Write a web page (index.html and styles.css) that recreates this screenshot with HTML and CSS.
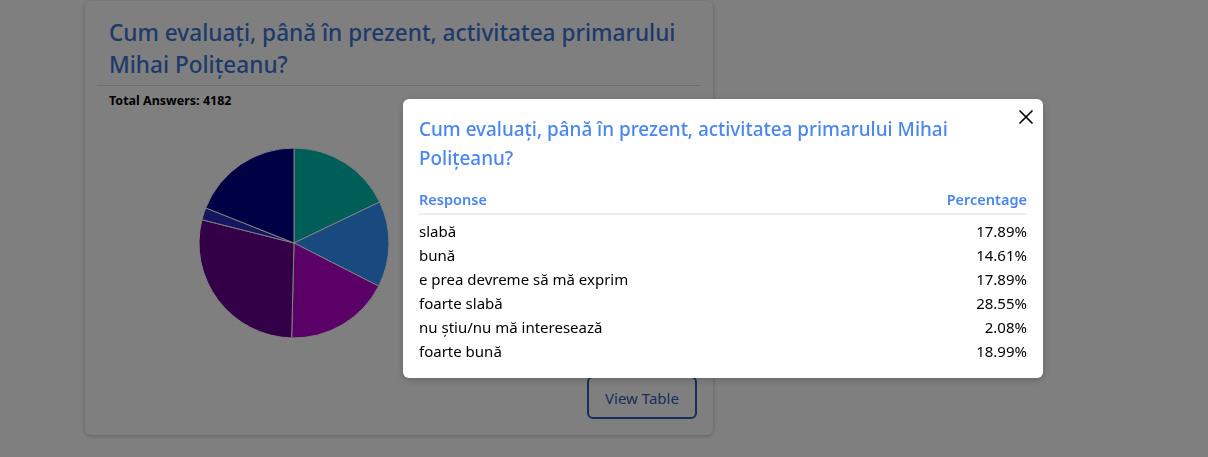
FILE: index.html
```html
<!DOCTYPE html>
<html lang="ro">
<head>
<meta charset="utf-8">
<title>Rezultate</title>
<link rel="stylesheet" href="styles.css">
</head>
<body>
<div class="page">
  <div class="card">
    <div class="card-head">
      <h2 class="card-title">Cum evaluați, până în prezent, activitatea primarului Mihai Polițeanu?</h2>
    </div>
    <div class="total">Total Answers: 4182</div>
    <div class="chart">
      <svg class="pie" width="200" height="200" viewBox="0 0 200 200">
        <g stroke="#ffffff" stroke-width="1">
          <path d="M100 100 L100 5 A95 95 0 0 1 185.67 58.96 Z" fill="#00bcb2"/>
          <path d="M100 100 L185.67 58.96 A95 95 0 0 1 184.65 143.13 Z" fill="#3094fe"/>
          <path d="M100 100 L184.65 143.13 A95 95 0 0 1 97.67 194.97 Z" fill="#b600cc"/>
          <path d="M100 100 L97.67 194.97 A95 95 0 0 1 7.90 76.72 Z" fill="#660090"/>
          <path d="M100 100 L7.90 76.72 A95 95 0 0 1 11.72 64.92 Z" fill="#2a2ac0"/>
          <path d="M100 100 L11.72 64.92 A95 95 0 0 1 100 5 Z" fill="#00008a"/>
        </g>
      </svg>
    </div>
    <div class="card-foot">
      <button class="btn-outline">View Table</button>
    </div>
  </div>
</div>

<div class="overlay"></div>

<div class="modal">
  <button class="close" aria-label="Close">
    <svg width="16" height="16" viewBox="0 0 16 16"><path d="M2 2 L14 14 M14 2 L2 14" stroke="#000" stroke-width="1.7" stroke-linecap="round"/></svg>
  </button>
  <h3 class="modal-title">Cum evaluați, până în prezent, activitatea primarului Mihai Polițeanu?</h3>
  <table class="results">
    <thead>
      <tr><th class="left">Response</th><th class="right">Percentage</th></tr>
    </thead>
    <tbody>
      <tr><td>slabă</td><td class="right">17.89%</td></tr>
      <tr><td>bună</td><td class="right">14.61%</td></tr>
      <tr><td>e prea devreme să mă exprim</td><td class="right">17.89%</td></tr>
      <tr><td>foarte slabă</td><td class="right">28.55%</td></tr>
      <tr><td>nu știu/nu mă interesează</td><td class="right">2.08%</td></tr>
      <tr><td>foarte bună</td><td class="right">18.99%</td></tr>
    </tbody>
  </table>
</div>
</body>
</html>
```

FILE: styles.css
```css
* { box-sizing: border-box; }
html, body { margin: 0; padding: 0; }
body {
  background: #ffffff;
  font-family: "Noto Sans", "Open Sans", sans-serif;
  color: #000;
  width: 1208px;
  height: 457px;
  overflow: hidden;
}
.page {
  padding: 1px 0 0 85px;
}
.card {
  width: 628px;
  height: 434px;
  background: #fff;
  border-radius: 6px;
  box-shadow: 0 1px 4px rgba(0,0,0,0.25);
  padding: 0 12px 16px;
  display: flex;
  flex-direction: column;
}
.card-head {
  padding: 16px 12px 4px;
  border-bottom: 1px solid #dcdcdc;
}
.card-title {
  margin: 0;
  font-size: 22.6px;
  font-weight: 500;
  line-height: 32px;
  color: #3b74d6;
}
.total {
  font-size: 12.5px;
  font-weight: 700;
  padding: 6px 12px 0;
  line-height: 18px;
}
.chart {
  padding: 33px 0 0 97px;
}
.pie { display: block; }
.card-foot {
  display: flex;
  justify-content: flex-end;
  margin-top: auto;
  padding-right: 4px;
}
.btn-outline {
  font-family: inherit;
  width: 110px;
  height: 43px;
  padding: 0;
  font-size: 15px;
  color: #2f5fb8;
  background: #fff;
  border: 2px solid #2a5db8;
  border-radius: 6px;
}
.overlay {
  position: fixed;
  inset: 0;
  background: rgba(0,0,0,0.5);
}
.modal {
  position: fixed;
  left: 403px;
  top: 99px;
  width: 640px;
  height: 279px;
  background: #fff;
  border-radius: 6px;
  padding: 16px 16px;
  box-shadow: 0 2px 8px rgba(0,0,0,0.2);
}
.close {
  position: absolute;
  right: 9px;
  top: 10px;
  width: 16px;
  height: 16px;
  padding: 0;
  border: 0;
  background: transparent;
}
.close svg { display: block; }
.modal-title {
  margin: 0;
  padding-right: 60px;
  font-size: 18.9px;
  font-weight: 500;
  line-height: 29px;
  color: #4a86f0;
}
.results {
  width: 100%;
  border-collapse: collapse;
  margin-top: 14px;
  font-size: 15px;
}
.results th {
  color: #4a86f0;
  font-weight: 600;
  font-size: 14.5px;
  padding: 0 0 2px;
  line-height: 24px;
  border-bottom: 2px solid #eeeeee;
}
.results td {
  padding: 0;
  line-height: 24px;
}
.results tbody tr:first-child td { padding-top: 4px; }
.left { text-align: left; }
.right { text-align: right; }
```
